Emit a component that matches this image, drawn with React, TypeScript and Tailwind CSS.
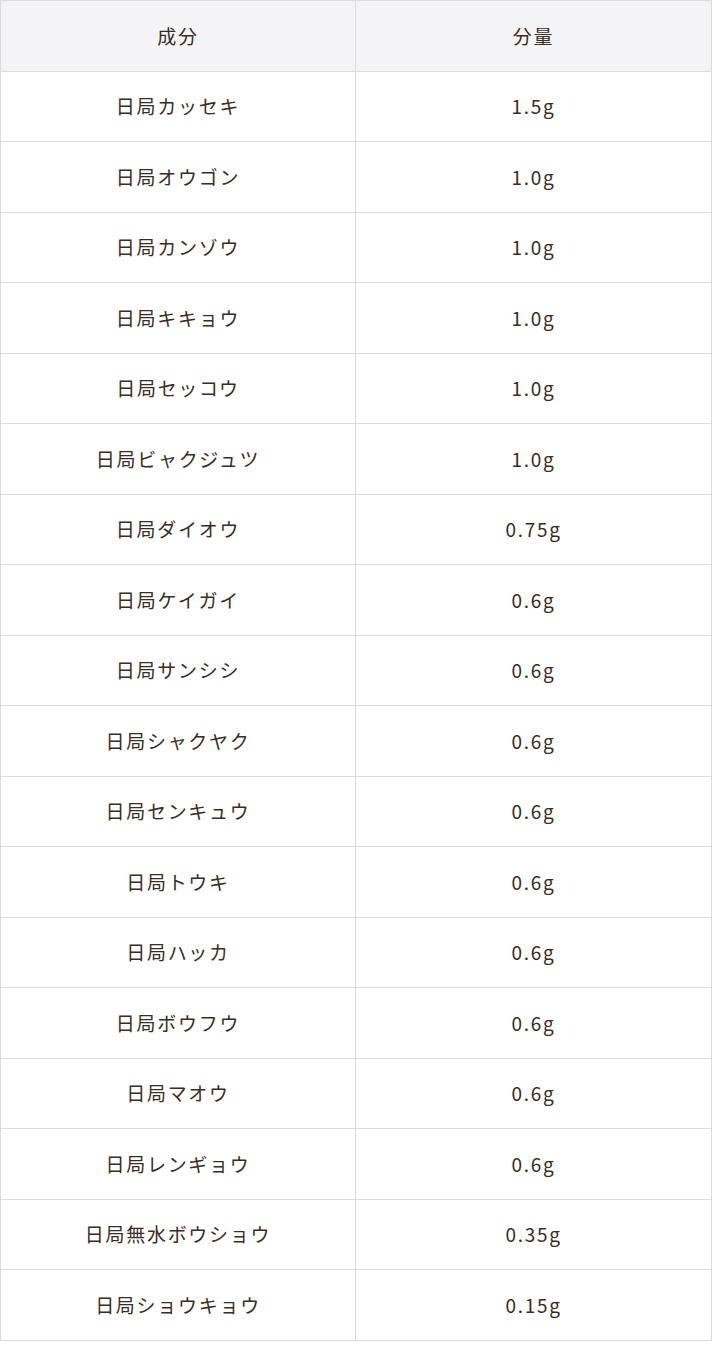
const rows: [string, string][] = [
  ['日局カッセキ', '1.5g'],
  ['日局オウゴン', '1.0g'],
  ['日局カンゾウ', '1.0g'],
  ['日局キキョウ', '1.0g'],
  ['日局セッコウ', '1.0g'],
  ['日局ビャクジュツ', '1.0g'],
  ['日局ダイオウ', '0.75g'],
  ['日局ケイガイ', '0.6g'],
  ['日局サンシシ', '0.6g'],
  ['日局シャクヤク', '0.6g'],
  ['日局センキュウ', '0.6g'],
  ['日局トウキ', '0.6g'],
  ['日局ハッカ', '0.6g'],
  ['日局ボウフウ', '0.6g'],
  ['日局マオウ', '0.6g'],
  ['日局レンギョウ', '0.6g'],
  ['日局無水ボウショウ', '0.35g'],
  ['日局ショウキョウ', '0.15g'],
]

export default function App() {
  return (
    <div className="bg-white" style={{ fontFamily: '"Noto Sans CJK JP", "Noto Sans", sans-serif' }}>
      <table className="w-[712px] border-collapse text-[19px] tracking-[0.09em] text-[#3a2d24]">
        <thead>
          <tr className="h-[70.5px] bg-[#f4f4f6]">
            <th className="w-[355px] border border-[#dcdcdc] font-normal">成分</th>
            <th className="border border-[#dcdcdc] font-normal">分量</th>
          </tr>
        </thead>
        <tbody>
          {rows.map(([name, amount]) => (
            <tr key={name} className="h-[70.5px]">
              <td className="border border-[#dcdcdc] text-center">{name}</td>
              <td className="border border-[#dcdcdc] text-center">{amount}</td>
            </tr>
          ))}
        </tbody>
      </table>
    </div>
  )
}
